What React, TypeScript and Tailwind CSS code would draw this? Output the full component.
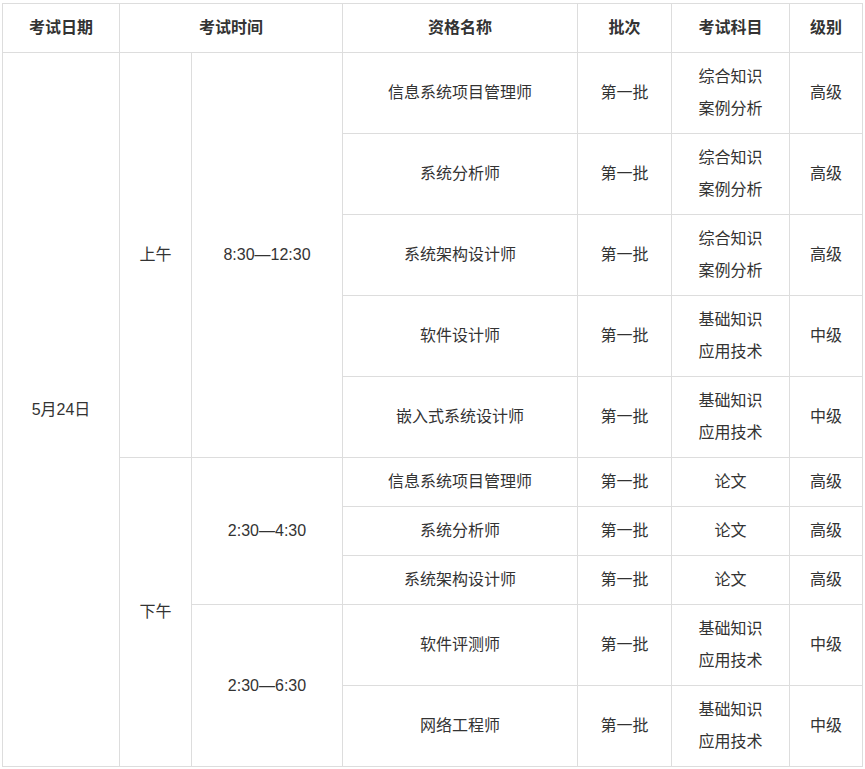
const rows = [
  { name: "信息系统项目管理师", subject: ["综合知识", "案例分析"], level: "高级" },
  { name: "系统分析师", subject: ["综合知识", "案例分析"], level: "高级" },
  { name: "系统架构设计师", subject: ["综合知识", "案例分析"], level: "高级" },
  { name: "软件设计师", subject: ["基础知识", "应用技术"], level: "中级" },
  { name: "嵌入式系统设计师", subject: ["基础知识", "应用技术"], level: "中级" },
  { name: "信息系统项目管理师", subject: ["论文"], level: "高级" },
  { name: "系统分析师", subject: ["论文"], level: "高级" },
  { name: "系统架构设计师", subject: ["论文"], level: "高级" },
  { name: "软件评测师", subject: ["基础知识", "应用技术"], level: "中级" },
  { name: "网络工程师", subject: ["基础知识", "应用技术"], level: "中级" },
];

const td = "border border-[#dddddd] px-2 py-2 text-center align-middle";

export default function App() {
  return (
    <div
      className="min-h-screen bg-white pl-[2px] pt-[3px] text-[16px] leading-8 text-[#333333]"
      style={{ fontFamily: '"Liberation Sans", "Noto Sans CJK SC", sans-serif' }}
    >
      <table className="w-[860px] table-fixed border-collapse">
        <colgroup>
          <col className="w-[117px]" />
          <col className="w-[72px]" />
          <col className="w-[151px]" />
          <col className="w-[235px]" />
          <col className="w-[94px]" />
          <col className="w-[118px]" />
          <col className="w-[73px]" />
        </colgroup>
        <thead>
          <tr>
            <th className={`${td} font-bold`}>考试日期</th>
            <th className={`${td} font-bold`} colSpan={2}>考试时间</th>
            <th className={`${td} font-bold`}>资格名称</th>
            <th className={`${td} font-bold`}>批次</th>
            <th className={`${td} font-bold`}>考试科目</th>
            <th className={`${td} font-bold`}>级别</th>
          </tr>
        </thead>
        <tbody>
          {rows.map((r, i) => (
            <tr key={i}>
              {i === 0 && <td className={td} rowSpan={10}>5月24日</td>}
              {i === 0 && <td className={td} rowSpan={5}>上午</td>}
              {i === 0 && <td className={td} rowSpan={5}>8:30—12:30</td>}
              {i === 5 && <td className={td} rowSpan={5}>下午</td>}
              {i === 5 && <td className={td} rowSpan={3}>2:30—4:30</td>}
              {i === 8 && <td className={td} rowSpan={2}>2:30—6:30</td>}
              <td className={td}>{r.name}</td>
              <td className={td}>第一批</td>
              <td className={td}>
                {r.subject.map((s) => (
                  <div key={s}>{s}</div>
                ))}
              </td>
              <td className={td}>{r.level}</td>
            </tr>
          ))}
        </tbody>
      </table>
    </div>
  );
}
